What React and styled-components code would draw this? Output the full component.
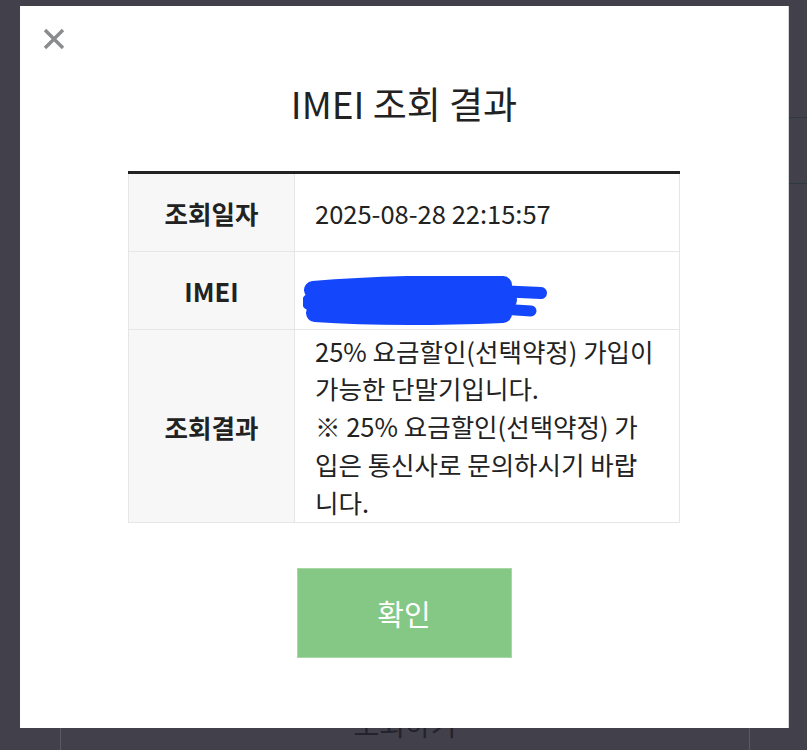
import React from "react";
import styled, { createGlobalStyle } from "styled-components";

const Global = createGlobalStyle`
  html, body { margin: 0; padding: 0; }
  body {
    background: #42414b;
    font-family: "Noto Sans CJK KR", "Noto Sans", sans-serif;
    color: #222;
  }
  * { box-sizing: border-box; }
`;

const Page = styled.div`
  position: relative;
  width: 807px;
  height: 750px;
  overflow: hidden;
  background: #42414b;
`;

const BgHeader = styled.div`
  margin: 117px 0 0 760px;
  height: 67px;
  border-top: 1px solid #2e3a40;
  border-bottom: 1px solid #2e3a40;
`;

const BgPanel = styled.div`
  margin: 520px 57px 0 60px;
  height: 60px;
  border-left: 1px solid #5a5964;
  border-right: 1px solid #5a5964;
  display: flex;
  justify-content: center;
`;

const BgButtonText = styled.span`
  margin-top: 0px;
  font-size: 28px;
  color: #23232b;
`;

const Modal = styled.div`
  position: absolute;
  top: 6px;
  left: 20px;
  width: 769px;
  height: 722px;
  background: #fff;
  border-right: 1px solid #d6d6d6;
  display: flex;
  flex-direction: column;
  align-items: center;
`;

const Close = styled.button`
  position: absolute;
  top: 19px;
  left: 20px;
  width: 28px;
  height: 28px;
  padding: 0;
  border: none;
  background: none;
  display: flex;
  align-items: center;
  justify-content: center;
`;

const Title = styled.h2`
  margin: 72px 0 0;
  font-size: 37px;
  font-weight: 400;
  line-height: 50px;
  color: #222;
`;

const Table = styled.div`
  margin-top: 43px;
  width: 552px;
  border-top: 3px solid #222;
  display: grid;
  grid-template-columns: 166px 1fr;
`;

const Label = styled.div`
  background: #f7f7f7;
  border-bottom: 1px solid #e6e6e6;
  border-left: 1px solid #e6e6e6;
  height: ${(p) => p.h}px;
  display: flex;
  align-items: center;
  justify-content: center;
  font-size: 25.5px;
  font-weight: 700;
  color: #222;
`;

const Value = styled.div`
  border-bottom: 1px solid #e6e6e6;
  border-left: 1px solid #e6e6e6;
  border-right: 1px solid #e6e6e6;
  height: ${(p) => p.h}px;
  display: flex;
  align-items: center;
  padding-left: 20px;
  font-size: 25.5px;
  line-height: 37.8px;
  color: #222;
  white-space: nowrap;
`;

const ScribbleCell = styled(Value)`
  align-items: flex-start;
  padding: 24px 0 0 8px;
`;

const Confirm = styled.button`
  margin-top: 45px;
  width: 215px;
  height: 90px;
  background: #85c785;
  border: 1px solid #a6d8a6;
  color: #fff;
  font-family: "Noto Sans CJK KR", "Noto Sans", sans-serif;
  font-size: 29px;
  font-weight: 400;
`;

function Scribble() {
  return (
    <svg width="250" height="50" viewBox="0 0 250 50">
      <g stroke="#1447fb" strokeLinecap="round" fill="none">
        <path d="M10 14 C70 9 150 7 200 9" strokeWidth="18" />
        <path d="M8 26 C80 24 150 22 205 24" strokeWidth="18" />
        <path d="M12 37 C80 42 150 40 200 38" strokeWidth="18" />
        <path d="M195 15 L238 17" strokeWidth="12" />
        <path d="M195 33 L228 35" strokeWidth="11" />
      </g>
    </svg>
  );
}

export default function App() {
  return (
    <Page>
      <Global />
      <BgHeader />
      <BgPanel>
        <BgButtonText>조회하기</BgButtonText>
      </BgPanel>
      <Modal>
        <Close aria-label="닫기">
          <svg width="22" height="22" viewBox="0 0 22 22">
            <path d="M2 2 L20 20 M20 2 L2 20" stroke="#8a8b8f" strokeWidth="3.4" />
          </svg>
        </Close>
        <Title>IMEI 조회 결과</Title>
        <Table>
          <Label h={78}>조회일자</Label>
          <Value h={78}>2025-08-28 22:15:57</Value>
          <Label h={78}>IMEI</Label>
          <ScribbleCell h={78}>
            <Scribble />
          </ScribbleCell>
          <Label h={193}>조회결과</Label>
          <Value h={193}>
            <div>
              25% 요금할인(선택약정) 가입이
              <br />
              가능한 단말기입니다.
              <br />
              ※ 25% 요금할인(선택약정) 가
              <br />
              입은 통신사로 문의하시기 바랍
              <br />
              니다.
            </div>
          </Value>
        </Table>
        <Confirm>확인</Confirm>
      </Modal>
    </Page>
  );
}
